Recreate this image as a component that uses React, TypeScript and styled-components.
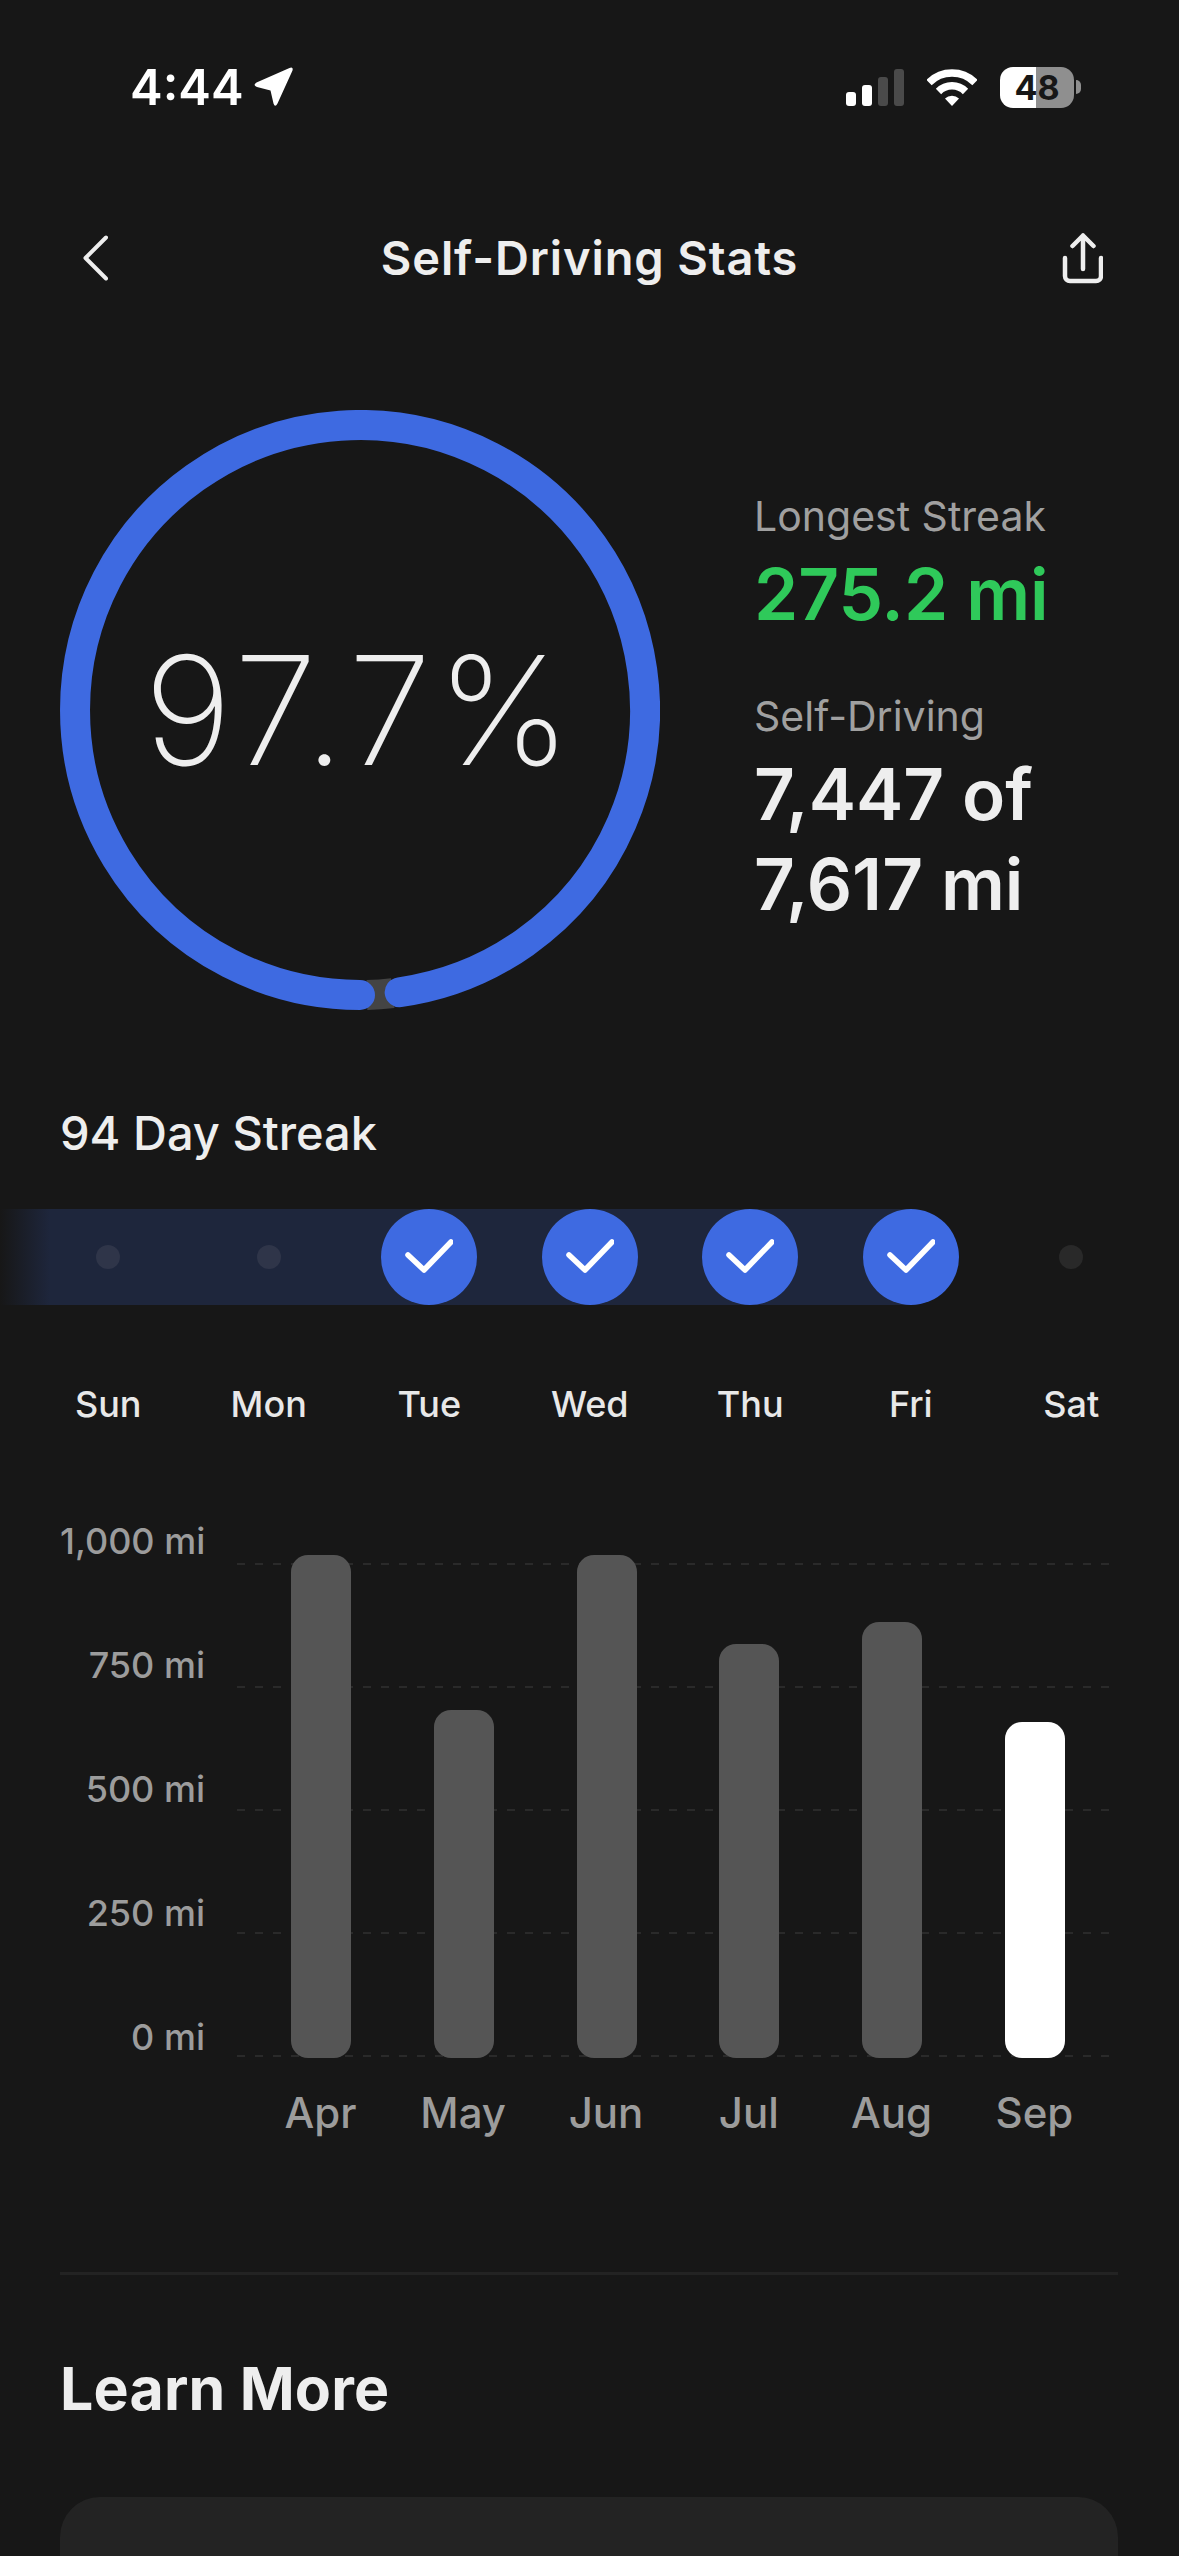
import { styled, createGlobalStyle } from "styled-components"

const GlobalStyle = createGlobalStyle`
    html, body {
        margin: 0;
        padding: 0;
        background: #171717;
    }
    * {
        box-sizing: border-box;
    }
    svg {
        display: block;
    }
`

const Page = styled.main`
    width: 1179px;
    height: 2556px;
    overflow: hidden;
    display: flex;
    flex-direction: column;
    background: #171717;
    color: #eeeeee;
    font-family: Inter, "Liberation Sans", sans-serif;
    & > * {
        flex: none;
    }
`

const StatusBar = styled.header`
    height: 174px;
    display: flex;
    align-items: center;
    justify-content: space-between;
    padding: 0 98px 0 130px;
`

const StatusLeft = styled.div`
    display: flex;
    align-items: center;
    gap: 10px;
`

const Clock = styled.span`
    font-size: 49px;
    font-weight: 600;
    color: #ffffff;
    line-height: 1;
`

const StatusRight = styled.div`
    display: flex;
    align-items: center;
    gap: 23px;
`

const Battery = styled.div`
    display: flex;
    align-items: center;
    gap: 2px;
`

const BatteryBody = styled.div`
    width: 74px;
    height: 41px;
    border-radius: 13px;
    background: linear-gradient(to right, #ffffff 0 36px, #8f8f8f 36px 100%);
    color: #171717;
    font-size: 34px;
    font-weight: 700;
    line-height: 41px;
    text-align: center;
`

const BatteryNub = styled.div`
    width: 5px;
    height: 14px;
    border-radius: 0 7px 7px 0;
    background: #8f8f8f;
`

const Nav = styled.nav`
    height: 168px;
    display: grid;
    grid-template-columns: 1fr auto 1fr;
    align-items: center;
    padding: 0 76px;
`

const NavRight = styled.div`
    display: flex;
    justify-content: flex-end;
`

const Title = styled.h1`
    margin: 0;
    font-size: 47px;
    font-weight: 600;
    line-height: 56px;
    letter-spacing: 0.9px;
`

const StatsRow = styled.section`
    margin-top: 68px;
    padding-left: 60px;
    display: flex;
    align-items: center;
    gap: 94px;
`

const RingWrap = styled.div`
    position: relative;
    width: 600px;
    height: 600px;
    flex: none;
`

const RingValue = styled.div`
    position: absolute;
    inset: 0;
    display: flex;
    align-items: center;
    justify-content: center;
    font-size: 151px;
    font-weight: 250;
    color: #eeeeee;
    letter-spacing: 5px;
`

const Side = styled.div`
    display: flex;
    flex-direction: column;
    gap: 52px;
`

const StatBlock = styled.div`
    display: flex;
    flex-direction: column;
`

const StatLabel = styled.div`
    font-size: 41px;
    line-height: 50px;
    margin-bottom: 8px;
    color: #a0a0a0;
`

const StatValue = styled.div<{ $green?: boolean }>`
    font-size: 71px;
    line-height: 90px;
    font-weight: 600;
    color: ${(p) => (p.$green ? "#2fc95a" : "#eeeeee")};
`

const StreakTitle = styled.h2`
    margin: 95px 0 0;
    padding-left: 60px;
    font-size: 47px;
    line-height: 56px;
    font-weight: 500;
`

const StreakTrack = styled.div`
    margin-top: 48px;
    height: 96px;
    padding: 0 28px;
    display: grid;
    grid-template-columns: repeat(7, 160.5px);
    justify-items: center;
    align-items: center;
    background: linear-gradient(to right, transparent, #1e263c 50px) no-repeat;
    background-size: 910px 100%;
`

const Check = styled.div`
    width: 96px;
    height: 96px;
    border-radius: 50%;
    background: #3e6ae1;
    display: flex;
    align-items: center;
    justify-content: center;
`

const Dot = styled.div<{ $onTrack?: boolean }>`
    width: 24px;
    height: 24px;
    border-radius: 50%;
    background: ${(p) => (p.$onTrack ? "#2f3549" : "#292929")};
`

const DayRow = styled.div`
    margin-top: 79px;
    padding: 0 28px;
    display: grid;
    grid-template-columns: repeat(7, 160.5px);
`

const Day = styled.div`
    text-align: center;
    font-size: 36px;
    line-height: 40px;
    font-weight: 500;
    color: #e8e8e8;
`

const Chart = styled.section`
    margin-top: 131px;
    padding: 0 61px 0 60px;
    display: flex;
    align-items: flex-start;
`

const YAxis = styled.div`
    width: 145px;
    flex: none;
    margin-top: -36px;
    display: flex;
    flex-direction: column;
    gap: 80px;
`

const YLabel = styled.div`
    height: 44px;
    text-align: right;
    white-space: nowrap;
    font-size: 36px;
    line-height: 44px;
    font-weight: 500;
    color: #9c9c9c;
`

const Plot = styled.div`
    position: relative;
    flex: 1;
    margin-left: 32px;
    height: 503px;
    display: flex;
    align-items: flex-end;
    gap: 82.8px;
    padding-left: 54px;
`

const GridLines = styled.div`
    position: absolute;
    inset: 8px 0 1px;
    display: flex;
    flex-direction: column;
    justify-content: space-between;
`

const GridLine = styled.div`
    height: 2px;
    background: repeating-linear-gradient(to right, #2a2a2a 0 8px, transparent 8px 18px);
`

const Bar = styled.div<{ $active?: boolean }>`
    position: relative;
    width: 60px;
    border-radius: 17px;
    background: ${(p) => (p.$active ? "#ffffff" : "#555555")};
`

const MonthRow = styled.div`
    margin-top: 29px;
    padding-left: 249px;
    display: grid;
    grid-template-columns: repeat(6, 142.8px);
`

const Month = styled.div`
    text-align: center;
    font-size: 42px;
    line-height: 50px;
    font-weight: 500;
    color: #9c9c9c;
`

const Divider = styled.hr`
    margin: 134px 61px 0 60px;
    height: 3px;
    border: 0;
    background: #232323;
`

const SectionTitle = styled.h2`
    margin: 79px 0 0;
    padding-left: 60px;
    font-size: 59px;
    line-height: 70px;
    font-weight: 700;
    letter-spacing: 0.2px;
`

const Card = styled.div`
    margin: 73px 61px 0 60px;
    height: 300px;
    border-radius: 40px;
    background: #232323;
`

const days = ["Sun", "Mon", "Tue", "Wed", "Thu", "Fri", "Sat"]
const yLabels = ["1,000 mi", "750 mi", "500 mi", "250 mi", "0 mi"]
const bars = [
    { month: "Apr", height: 503 },
    { month: "May", height: 348 },
    { month: "Jun", height: 503 },
    { month: "Jul", height: 414 },
    { month: "Aug", height: 436 },
    { month: "Sep", height: 336, active: true },
]

// degrees counted from 6 o'clock, towards the right side of the ring
const ringPoint = (deg: number) => {
    const rad = (deg * Math.PI) / 180
    return `${(300 + 285 * Math.sin(rad)).toFixed(2)} ${(300 + 285 * Math.cos(rad)).toFixed(2)}`
}

const Ring = () => (
    <svg width="600" height="600" viewBox="0 0 600 600" fill="none">
        <path d={`M${ringPoint(1.4)} A285 285 0 0 0 ${ringPoint(6.6)}`} stroke="#444444" strokeWidth="30" />
        <path
            d={`M${ringPoint(0)} A285 285 0 1 1 ${ringPoint(8)}`}
            stroke="#3e6ae1"
            strokeWidth="30"
            strokeLinecap="round"
        />
    </svg>
)

const LocationArrow = () => (
    <svg width="40" height="40" viewBox="0 0 40 40" fill="#ffffff">
        <path d="M35.500 1Q39.500 -.5 38.500 3.500L23.500 36.500Q21 41 19.500 36.500L16.500 23.500 3 20Q-1.500 18 2.500 15.500z" />
    </svg>
)

const Signal = () => (
    <svg width="58" height="37" viewBox="0 0 58 37">
        <rect x="0" y="23" width="10" height="14" rx="3" fill="#ffffff" />
        <rect x="16" y="16" width="10" height="21" rx="3" fill="#ffffff" />
        <rect x="32" y="8" width="10" height="29" rx="3" fill="#4a4a4a" />
        <rect x="48" y="0" width="10" height="37" rx="3" fill="#4a4a4a" />
    </svg>
)

const Wifi = () => (
    <svg width="50" height="37" viewBox="0 0 50 37" fill="none" stroke="#ffffff" strokeWidth="7.5">
        <path d="M2 13.500A32.500 32.500 0 0 1 48 13.500" />
        <path d="M11.500 22.500A19 19 0 0 1 38.500 22.500" />
        <path d="M18 29.500a10 10 0 0 1 14 0L25 37z" fill="#ffffff" stroke="none" />
    </svg>
)

const BackIcon = () => (
    <svg width="32" height="46" viewBox="0 0 32 46" fill="none" stroke="#eeeeee" strokeWidth="4" strokeLinecap="round" strokeLinejoin="round">
        <path d="M30 2.500 9.500 23 30 43.500" />
    </svg>
)

const ShareIcon = () => (
    <svg width="42" height="52" viewBox="0 0 42 52" fill="none" stroke="#eeeeee" strokeWidth="4.500" strokeLinecap="round" strokeLinejoin="round">
        <path d="M22 37V3.500M11.500 14 22 3.500 32.500 14" />
        <path d="M4 26v18a5 5 0 0 0 5 5h26a5 5 0 0 0 5-5V26" />
    </svg>
)

const CheckIcon = () => (
    <svg width="48" height="36" viewBox="0 0 48 36" fill="none" stroke="#ffffff" strokeWidth="5.500" strokeLinecap="round" strokeLinejoin="round">
        <path d="M3 16l16 15L46 3" />
    </svg>
)

const App = () => {
    return (
        <Page>
            <GlobalStyle />
            <StatusBar>
                <StatusLeft>
                    <Clock>4:44</Clock>
                    <LocationArrow />
                </StatusLeft>
                <StatusRight>
                    <Signal />
                    <Wifi />
                    <Battery>
                        <BatteryBody>48</BatteryBody>
                        <BatteryNub />
                    </Battery>
                </StatusRight>
            </StatusBar>

            <Nav>
                <div>
                    <BackIcon />
                </div>
                <Title>Self-Driving Stats</Title>
                <NavRight>
                    <ShareIcon />
                </NavRight>
            </Nav>

            <StatsRow>
                <RingWrap>
                    <Ring />
                    <RingValue>97.7%</RingValue>
                </RingWrap>
                <Side>
                    <StatBlock>
                        <StatLabel>Longest Streak</StatLabel>
                        <StatValue $green>275.2 mi</StatValue>
                    </StatBlock>
                    <StatBlock>
                        <StatLabel>Self-Driving</StatLabel>
                        <StatValue>7,447 of</StatValue>
                        <StatValue>7,617 mi</StatValue>
                    </StatBlock>
                </Side>
            </StatsRow>

            <StreakTitle>94 Day Streak</StreakTitle>
            <StreakTrack>
                <Dot $onTrack />
                <Dot $onTrack />
                <Check><CheckIcon /></Check>
                <Check><CheckIcon /></Check>
                <Check><CheckIcon /></Check>
                <Check><CheckIcon /></Check>
                <Dot />
            </StreakTrack>
            <DayRow>
                {days.map((d) => (
                    <Day key={d}>{d}</Day>
                ))}
            </DayRow>

            <Chart>
                <YAxis>
                    {yLabels.map((l) => (
                        <YLabel key={l}>{l}</YLabel>
                    ))}
                </YAxis>
                <Plot>
                    <GridLines>
                        {yLabels.map((l) => (
                            <GridLine key={l} />
                        ))}
                    </GridLines>
                    {bars.map((b) => (
                        <Bar key={b.month} $active={b.active} style={{ height: b.height }} />
                    ))}
                </Plot>
            </Chart>
            <MonthRow>
                {bars.map((b) => (
                    <Month key={b.month}>{b.month}</Month>
                ))}
            </MonthRow>

            <Divider />
            <SectionTitle>Learn More</SectionTitle>
            <Card />
        </Page>
    )
}

export default App
